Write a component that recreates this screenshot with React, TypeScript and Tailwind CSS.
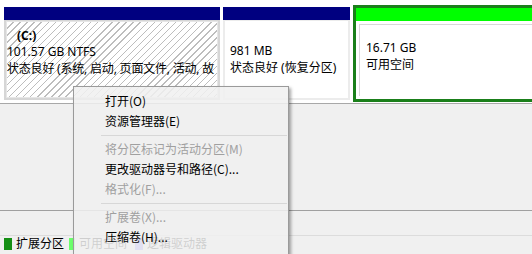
import React from "react";

const hatch =
  "bg-[repeating-linear-gradient(135deg,#ffffff_0px,#ffffff_4px,#bdbdbd_4px,#bdbdbd_5px)]";

type Item = { label: string; disabled?: boolean } | "sep";

const items: Item[] = [
  { label: "打开(O)" },
  { label: "资源管理器(E)" },
  "sep",
  { label: "将分区标记为活动分区(M)", disabled: true },
  { label: "更改驱动器号和路径(C)..." },
  { label: "格式化(F)...", disabled: true },
  "sep",
  { label: "扩展卷(X)...", disabled: true },
  { label: "压缩卷(H)..." },
];

export default function App() {
  return (
    <div className="relative w-[532px] h-[254px] overflow-hidden bg-[#f0f0f0] text-[12px] leading-none text-black font-['Noto_Sans','Noto_Sans_CJK_SC',sans-serif]">
      {/* partitions strip */}
      <div className="h-[104px] bg-white border-b border-[#a8a8a8] flex pt-[7px] pl-[4px] gap-[3px]">
        {/* C: */}
        <div className="w-[216px] h-[93px] flex flex-col">
          <div className="h-[13px] bg-[#000080]" />
          <div className="flex-1 border-[2px] border-[#d6d6d6] border-t-[1px]">
            <div className={`h-full border border-[#e6e6e6] ${hatch} pl-0 pt-[6px]`}>
              <div className="font-bold pl-[10px] h-[15px] flex items-center">(C:)</div>
              <div className="h-[17px] flex items-center">101.57 GB NTFS</div>
              <div className="h-[18px] flex items-center whitespace-nowrap tracking-[-0.2px]">
                状态良好 (系统, 启动, 页面文件, 活动, 故
              </div>
            </div>
          </div>
        </div>
        {/* recovery */}
        <div className="w-[127px] h-[93px] flex flex-col">
          <div className="h-[13px] bg-[#000080]" />
          <div className="flex-1 border-[2px] border-[#ececec] border-t-[1px] pl-[5px] pt-[21px]">
            <div className="h-[17px] flex items-center">981 MB</div>
            <div className="h-[18px] flex items-center whitespace-nowrap">状态良好 (恢复分区)</div>
          </div>
        </div>
        {/* free space */}
        <div className="flex-1 -mt-[2px] h-[97px] border-[3px] border-r-0 border-[#1a7f1a] flex flex-col">
          <div className="h-[13px] bg-[#00ff00]" />
          <div className="flex-1 bg-white p-[3px] pr-0">
            <div className="h-full border-l border-t border-[#d8d8d8] pl-[6px] pt-[14px]">
              <div className="h-[17px] flex items-center">16.71 GB</div>
              <div className="h-[18px] flex items-center">可用空间</div>
            </div>
          </div>
        </div>
      </div>

      {/* empty graphical area */}
      <div className="h-[107px] border-b border-[#a0a0a0]" />
      <div className="h-[25px] border-b border-[#dcdcdc]" />

      {/* legend */}
      <div className="h-[16px] flex items-center gap-[4px] pl-[4px]">
        <div className="w-[8px] h-[12px] bg-[#148f14]" />
        <span className="mr-[1px]">扩展分区</span>
        <div className="w-[6px] h-[12px] bg-[#6cff6c]" />
        <span>可用空间</span>
        <div className="w-[8px] h-[12px] bg-[#8080ff] ml-[4px]" />
        <span>逻辑驱动器</span>
      </div>

      {/* context menu */}
      <div className="absolute left-[73px] top-[86px] w-[216px] h-[180px] border border-[#9a9a9a] bg-[rgba(240,240,240,0.86)] shadow-[2px_2px_3px_rgba(0,0,0,0.35)] py-[4px] font-['Noto_Sans_CJK_SC',sans-serif]">
        {items.map((it, i) =>
          it === "sep" ? (
            <div key={i} className="h-[8px] flex items-center pl-[27px] pr-[1px]">
              <div className="h-px w-full bg-[#d7d7d7]" />
            </div>
          ) : (
            <div
              key={i}
              className={`h-[20px] flex items-center pl-[31px] whitespace-nowrap ${
                it.disabled ? "text-[#a0a0a0]" : "text-black"
              }`}
            >
              {it.label}
            </div>
          )
        )}
      </div>
    </div>
  );
}
